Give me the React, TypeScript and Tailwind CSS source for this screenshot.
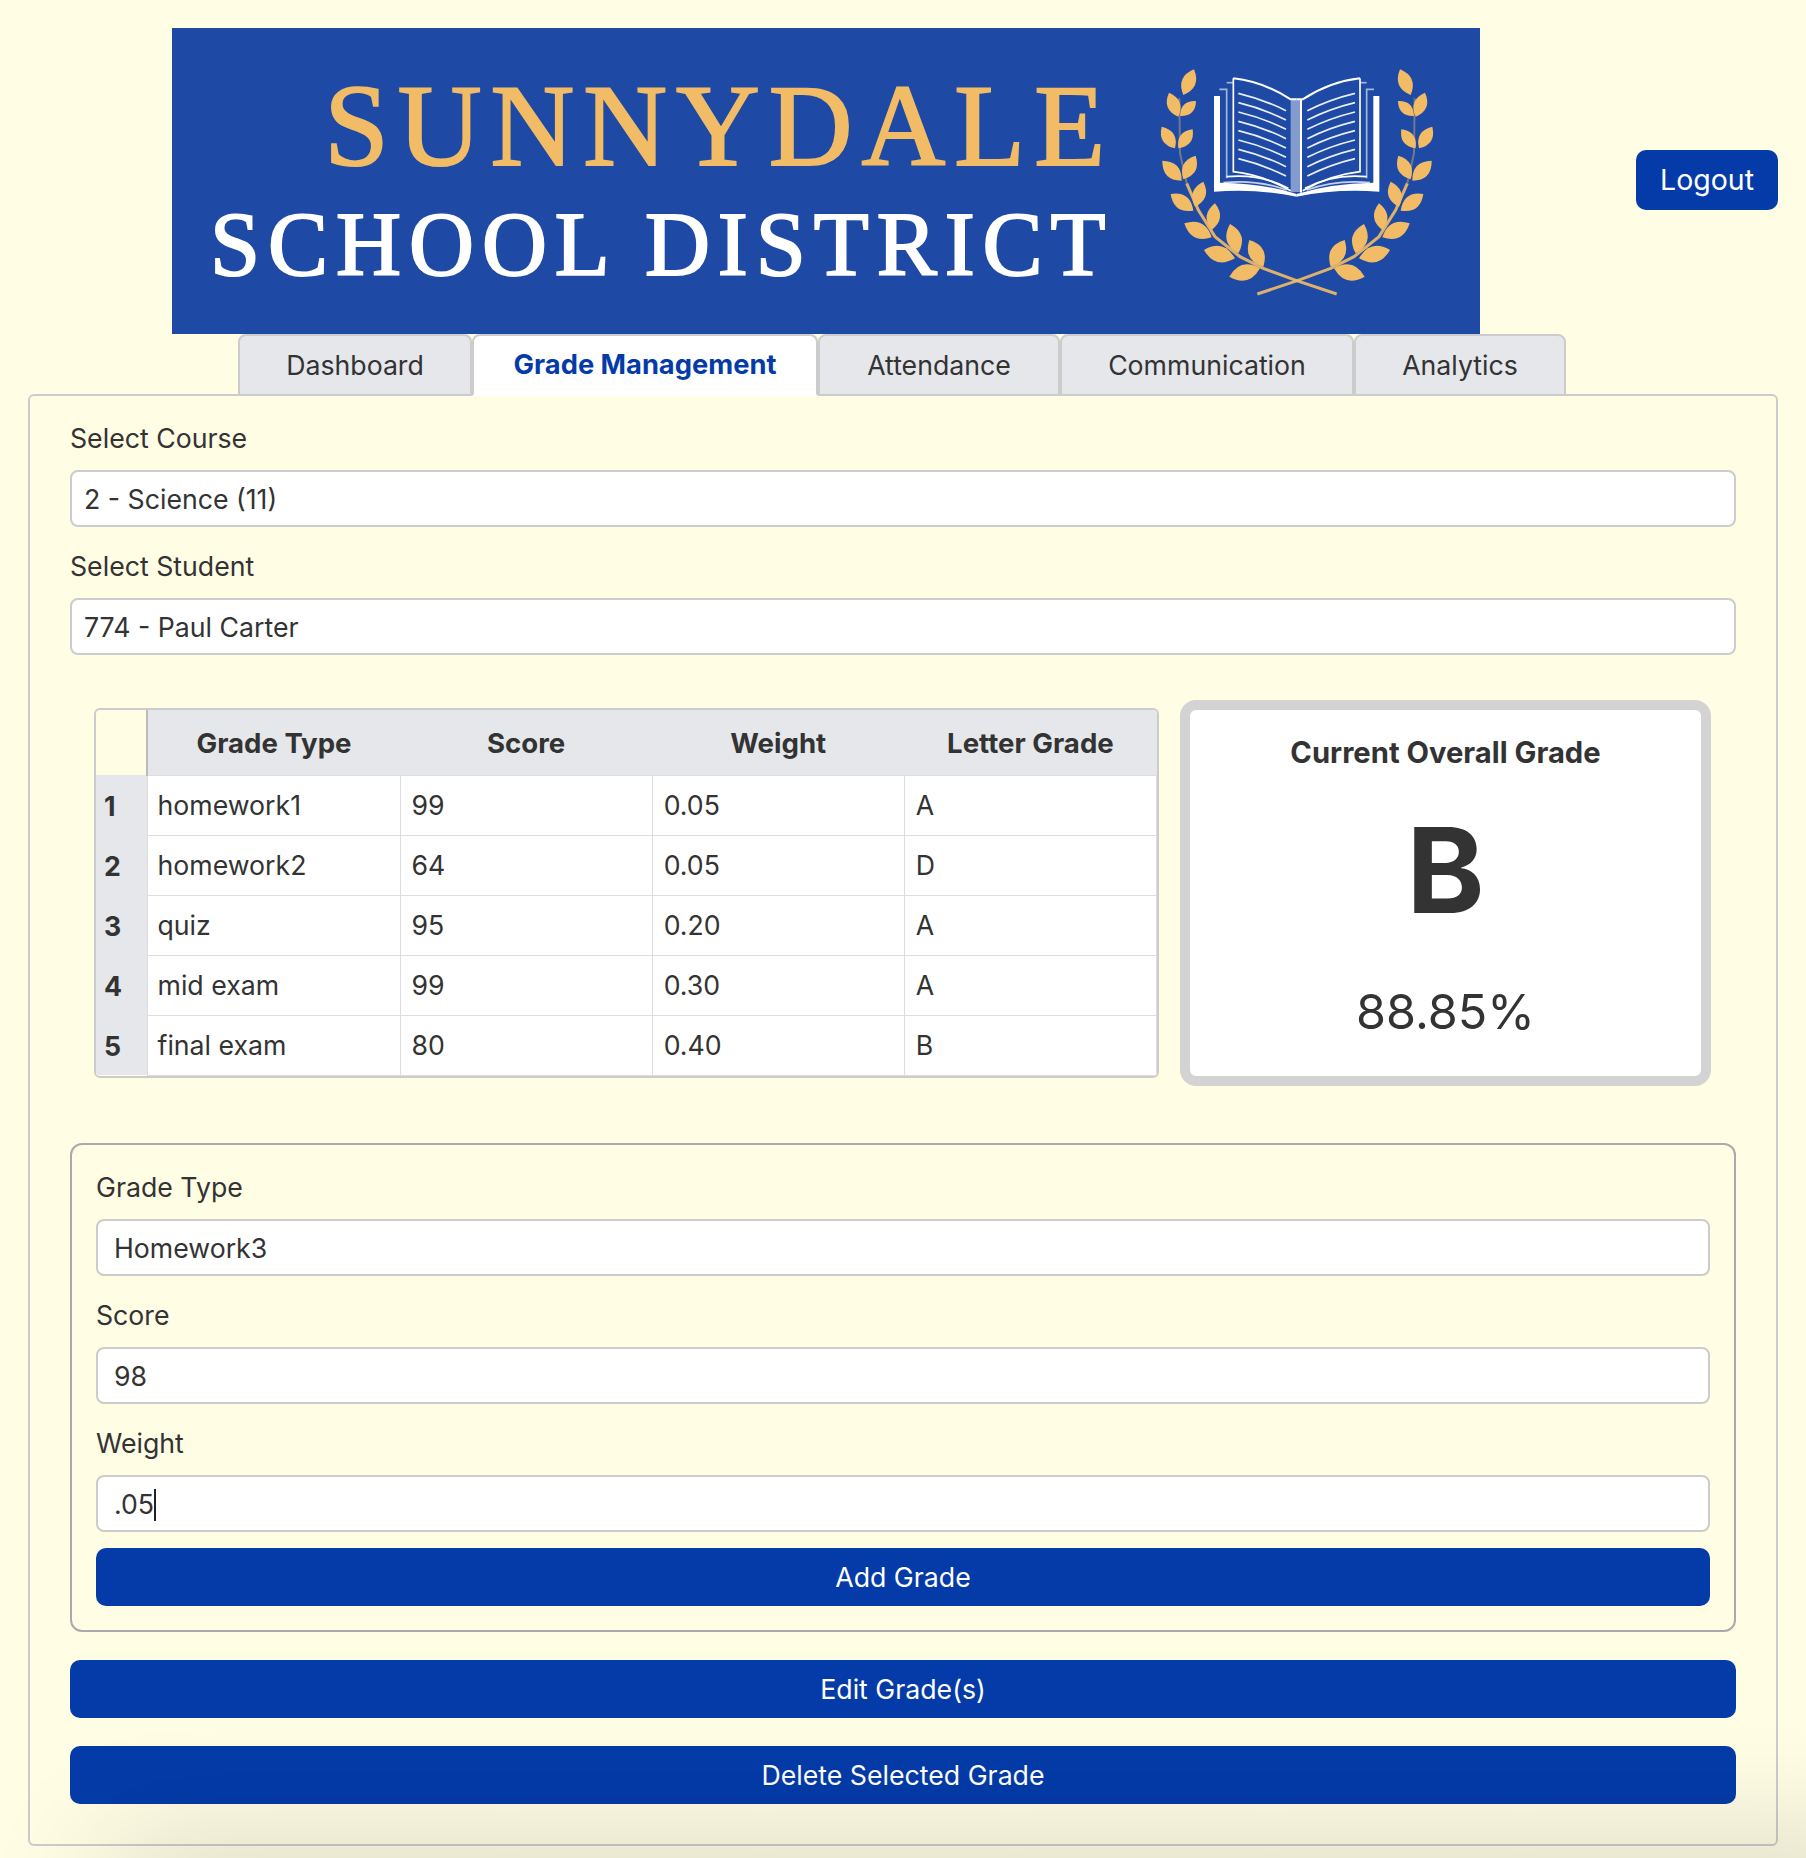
const rows = [
  { n: 1, type: "homework1", score: "99", weight: "0.05", letter: "A" },
  { n: 2, type: "homework2", score: "64", weight: "0.05", letter: "D" },
  { n: 3, type: "quiz", score: "95", weight: "0.20", letter: "A" },
  { n: 4, type: "mid exam", score: "99", weight: "0.30", letter: "A" },
  { n: 5, type: "final exam", score: "80", weight: "0.40", letter: "B" },
];

const tabs = [
  { label: "Dashboard", w: "w-[234px]" },
  { label: "Grade Management", w: "w-[346px]", active: true },
  { label: "Attendance", w: "w-[242px]" },
  { label: "Communication", w: "w-[294px]" },
  { label: "Analytics", w: "w-[212px]" },
];

// base -> tip, in zoomed picture coordinates
const leaves = [
  [160, 165, 192, 88],
  [145, 230, 117, 158],
  [150, 228, 198, 183],
  [135, 325, 95, 260],
  [145, 325, 188, 268],
  [155, 422, 97, 362],
  [160, 418, 197, 347],
  [190, 512, 122, 462],
  [195, 500, 220, 425],
  [245, 592, 163, 550],
  [245, 570, 255, 490],
  [315, 655, 222, 630],
  [325, 640, 300, 552],
  [390, 685, 298, 710],
  [400, 680, 358, 600],
];

function leafPath(x1: number, y1: number, x2: number, y2: number) {
  const dx = x2 - x1;
  const dy = y2 - y1;
  const mx = x1 + dx * 0.5;
  const my = y1 + dy * 0.5;
  const k = 0.5;
  return `M${x1} ${y1}Q${mx - dy * k} ${my + dx * k} ${x2} ${y2}Q${mx + dy * k} ${my - dx * k} ${x1} ${y1}Z`;
}

function Laurel() {
  return (
    <g>
      <path d="M148 175L150 340L170 430" fill="none" stroke="#f2bc66" strokeOpacity="0.4" strokeWidth="6" />
      <path d="M170 430L205 510L255 590L330 650L400 685L500 722L620 762" fill="none" stroke="#f2bc66" strokeOpacity="0.9" strokeWidth="9" />
      {leaves.map((l, i) => (
        <path key={i} d={leafPath(l[0], l[1], l[2], l[3])} fill="#f2bc66" />
      ))}
    </g>
  );
}

function BookSide() {
  const lines = [160, 188, 216, 244, 272, 300, 328, 356];
  return (
    <g fill="none" stroke="#fff">
      <path d="M252 168H270V428Q400 430 500 462V470Q380 445 252 455Z" fill="#fff" stroke="none" />
      <path d="M268 148H290V415" strokeOpacity="0.6" strokeWidth="5" />
      <path d="M290 128H310" strokeOpacity="0.6" strokeWidth="5" />
      <path d="M280 428Q380 418 470 450" strokeWidth="5" strokeOpacity="0.75" />
      <path d="M290 410Q390 400 475 445" strokeWidth="5" />
      <path d="M310 115V395Q400 405 482 452" strokeWidth="5" />
      <path d="M310 115Q400 125 482 178H500" strokeWidth="6" />
      {lines.map((y) => (
        <path key={y} d={`M325 ${y}Q400 ${y + 18} 468 ${y + 52}`} strokeWidth="5" strokeOpacity="0.9" />
      ))}
    </g>
  );
}

function SchoolEmblem() {
  return (
    <svg viewBox="0 0 1020 840" className="w-[340px] h-[280px] shrink-0">
      <Laurel />
      <g transform="translate(1002 0) scale(-1 1)">
        <Laurel />
      </g>
      <BookSide />
      <g transform="translate(1000 0) scale(-1 1)">
        <BookSide />
      </g>
      <rect x="482" y="178" width="30" height="278" fill="#fff" fillOpacity="0.45" />
      <rect x="510" y="178" width="6" height="280" fill="#fff" />
    </svg>
  );
}

function Field({
  label,
  value,
  caret,
  first,
  select,
}: {
  label: string;
  value: string;
  caret?: boolean;
  first?: boolean;
  select?: boolean;
}) {
  return (
    <div className={first ? "" : "mt-[22px]"}>
      <div className="h-[38px] leading-[34px]">{label}</div>
      <div
        className={`mt-[11px] h-[57px] pt-[2px] bg-white border-2 border-[#ccc] rounded-[8px] flex items-center ${
          select ? "px-[12px]" : "px-[16px]"
        }`}
      >
        {value}
        {caret && <span className="w-[2px] h-[32px] bg-[#222]" />}
      </div>
    </div>
  );
}

function BlueButton({ label, className }: { label: string; className: string }) {
  return (
    <div className={`h-[58px] rounded-[10px] bg-[#043ba8] text-white flex items-center justify-center ${className}`}>
      {label}
    </div>
  );
}

export default function App() {
  return (
    <div
      className="relative w-[1806px] h-[1858px] overflow-hidden bg-[#fffde4] text-[#333] text-[26.7px]"
      style={{ fontFamily: "Inter, 'Liberation Sans', sans-serif" }}
    >
      {/* Header */}
      <div className="flex justify-between items-center pt-[28px] pl-[172px] pr-[28px]">
        <div
          className="w-[1308px] h-[306px] bg-[#1e4aa5] flex items-start"
          style={{ fontFamily: "'Liberation Serif', serif" }}
        >
          <div className="w-[936px] flex flex-col items-end pt-[40px]">
            <div className="mr-[-6px] text-[116px] leading-[116px] tracking-[9px] text-[#f2bc66] [-webkit-text-stroke:2px_#f2bc66]">
              SUNNYDALE
            </div>
            <div className="mr-[-5.5px] mt-[16px] text-[90px] leading-[90px] tracking-[7.95px] text-white [-webkit-text-stroke:2px_#fff] whitespace-nowrap">
              SCHOOL DISTRICT
            </div>
          </div>
          <div className="ml-[22px] mt-[12px]">
            <SchoolEmblem />
          </div>
        </div>
        <div className="mb-[2px] w-[142px] h-[60px] rounded-[10px] bg-[#043ba8] text-white text-[28.5px] flex items-center justify-center">
          Logout
        </div>
      </div>

      {/* Tabs */}
      <div className="flex pl-[238px] h-[62px]">
        {tabs.map((t) => (
          <div
            key={t.label}
            className={`${t.w} border-2 border-[#ccc] rounded-t-[8px] flex items-center justify-center relative z-10 ${
              t.active ? "bg-white border-b-white text-[#043ba8] font-bold text-[27.3px]" : "bg-[#e5e7eb]"
            }`}
          >
            {t.label}
          </div>
        ))}
      </div>

      {/* Panel */}
      <div className="mx-[28px] -mt-[2px] h-[1452px] border-2 border-[#ccc] rounded-[6px] px-[40px] pt-[25px]">
        <Field first select label="Select Course" value="2 - Science (11)" />
        <Field select label="Select Student" value="774 - Paul Carter" />

        <div className="mt-[45px] flex items-start pl-[24px] pr-[24px]">
          <div className="mt-[8px] w-[1065px] h-[370px] border-2 border-[#ccc] rounded-[6px] overflow-hidden">
            <table className="w-full table-fixed border-collapse">
              <thead>
                <tr className="h-[65px] text-[27.6px]">
                  <th className="w-[51px] border-r-2 border-[#bbb]" />
                  <th className="w-[253px] bg-[#e5e7eb] font-bold pt-[2px]">Grade Type</th>
                  <th className="bg-[#e5e7eb] font-bold pt-[2px]">Score</th>
                  <th className="bg-[#e5e7eb] font-bold pt-[2px]">Weight</th>
                  <th className="bg-[#e5e7eb] font-bold pt-[2px]">Letter Grade</th>
                </tr>
              </thead>
              <tbody>
                {rows.map((r) => (
                  <tr key={r.n} className="h-[60px] bg-white">
                    <td className="bg-[#e5e7eb] font-bold pl-[8px] pt-[2px]">{r.n}</td>
                    <td className="border border-[#ddd] px-[10px]">{r.type}</td>
                    <td className="border border-[#ddd] px-[11px]">{r.score}</td>
                    <td className="border border-[#ddd] px-[11px]">{r.weight}</td>
                    <td className="border border-[#ddd] px-[11px]">{r.letter}</td>
                  </tr>
                ))}
              </tbody>
            </table>
          </div>
          <div className="ml-[21px] w-[531px] h-[386px] bg-white border-[10px] border-[#d3d3d3] rounded-[16px] flex flex-col items-center">
            <div className="mt-[23px] text-[29.2px] leading-[40px] font-bold">Current Overall Grade</div>
            <div className="mt-[27px] text-[118px] leading-[140px] font-bold">B</div>
            <div className="mt-[40px] text-[48.5px] leading-[64px]">88.85%</div>
          </div>
        </div>

        <div className="mt-[57px] h-[489px] border-2 border-[#aaa] rounded-[12px] px-[24px] pt-[25px]">
          <Field first label="Grade Type" value="Homework3" />
          <Field label="Score" value="98" />
          <Field caret label="Weight" value=".05" />
          <BlueButton label="Add Grade" className="mt-[16px]" />
        </div>

        <BlueButton label="Edit Grade(s)" className="mt-[28px]" />
        <BlueButton label="Delete Selected Grade" className="mt-[28px]" />
      </div>

      {/* shadow of something sitting below the fold */}
      <div className="absolute left-[110px] -right-[100px] top-[1858px] h-[60px] shadow-[0_0_130px_0_rgba(0,0,0,0.24)]" />
    </div>
  );
}
